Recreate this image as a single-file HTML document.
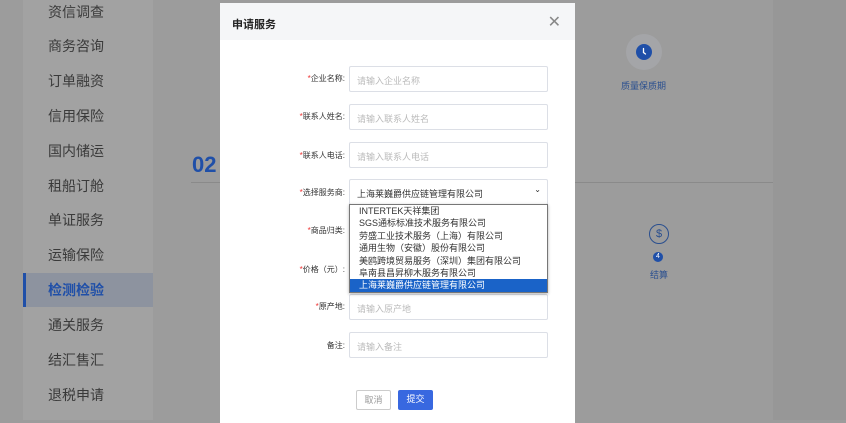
<!DOCTYPE html>
<html><head><meta charset="utf-8"><style>
*{margin:0;padding:0;box-sizing:border-box}
body{width:846px;height:420px;overflow:hidden;background:#9c9c9c;font-family:"Liberation Sans","Noto Sans CJK SC",sans-serif;position:relative}
.side{position:absolute;left:23px;top:0;width:130px;height:420px;background:#a2a2a2}
.side div{position:absolute;left:25px;font-size:14px;color:#3a3a3a;line-height:20px}
.act{position:absolute;left:23px;top:273px;width:130px;height:34px;background:#8d939f;border-left:3px solid #1f4fa8}
.right{position:absolute;left:773px;top:0;width:73px;height:420px;background:#979797}
.modal{position:absolute;left:220px;top:3px;width:355px;height:420px;background:#fff}
.hd{height:37px;background:#f5f6f8;padding:13px 12px;font-size:11px;font-weight:bold;color:#222}
.x{position:absolute;right:14px;top:9px;font-size:16px;color:#888}
.lab{position:absolute;right:230px;font-size:8px;color:#333;width:100px;text-align:right}
.lab b{color:#e33;font-weight:normal}
.in{position:absolute;left:129px;width:199px;height:26px;border:1px solid #dcdfe6;border-radius:2px;font-size:9px;color:#bbb;padding:7px 7px}
.dd{position:absolute;left:129px;top:201px;width:199px;height:89px;border:1px solid #777;background:#fff;font-size:9px;color:#333;box-shadow:0 1px 3px rgba(0,0,0,.3)}
.dd div{height:12.4px;line-height:12.4px;padding-left:9px;white-space:nowrap}
.dd .s{background:#1a63c8;color:#fff}
.btn{position:absolute;top:387px;height:20px;font-size:9px;border-radius:2px;text-align:center;line-height:18px}
</style></head><body>
<div class="side">
<div style="top:2px">资信调查</div><div style="top:36px">商务咨询</div><div style="top:71px">订单融资</div><div style="top:106px">信用保险</div><div style="top:141px">国内储运</div><div style="top:176px">租船订舱</div><div style="top:210px">单证服务</div><div style="top:245px">运输保险</div>
</div>
<div class="act"></div>
<div style="position:absolute;left:48px;top:280px;font-size:14px;font-weight:bold;color:#1f4fa8">检测检验</div>
<div class="side" style="background:none"><div style="top:315px">通关服务</div><div style="top:350px">结汇售汇</div><div style="top:385px">退税申请</div></div>
<div style="position:absolute;left:192px;top:152px;font-size:22px;font-weight:bold;color:#1f4fa8">02</div>
<div style="position:absolute;left:191px;top:182px;width:600px;height:1px;background:#8a8a8a"></div>
<div class="right"></div>
<div style="position:absolute;left:626px;top:34px;width:36px;height:36px;border-radius:50%;background:#a4a5a8"></div>
<svg style="position:absolute;left:636px;top:44px" width="16" height="16" viewBox="0 0 16 16"><circle cx="8" cy="8" r="8" fill="#1f4fa8"/><path d="M7.5 4.5V8.5L9.5 10" stroke="#fff" stroke-width="1.3" fill="none" stroke-linecap="round"/></svg>
<div style="position:absolute;left:621px;top:79px;font-size:9px;color:#2a4f8f">质量保质期</div>
<div style="position:absolute;left:649px;top:224px;width:20px;height:20px;border-radius:50%;border:1px solid #2a4f8f;font-size:11px;color:#2a4f8f;text-align:center;line-height:18px">$</div>
<div style="position:absolute;left:653px;top:252px;width:10px;height:10px;border-radius:50%;background:#1f4fa8;color:#fff;font-size:7px;text-align:center;line-height:10px">4</div>
<div style="position:absolute;left:650px;top:268px;font-size:9px;color:#2a4f8f">结算</div>
<div class="modal">
<div class="hd">申请服务</div><div class="x">✕</div>
<div class="lab" style="top:70px"><b>*</b>企业名称:</div><div class="in" style="top:63px">请输入企业名称</div>
<div class="lab" style="top:108px"><b>*</b>联系人姓名:</div><div class="in" style="top:101px">请输入联系人姓名</div>
<div class="lab" style="top:147px"><b>*</b>联系人电话:</div><div class="in" style="top:139px">请输入联系人电话</div>
<div class="lab" style="top:184px"><b>*</b>选择服务商:</div><div class="in" style="top:176px;color:#333">上海莱巍爵供应链管理有限公司<span style="position:absolute;right:6px;top:5px;font-size:8px">⌄</span></div>
<div class="lab" style="top:222px"><b>*</b>商品归类:</div>
<div class="lab" style="top:261px"><b>*</b>价格（元）:</div>
<div class="lab" style="top:298px"><b>*</b>原产地:</div><div class="in" style="top:291px">请输入原产地</div>
<div class="lab" style="top:337px">备注:</div><div class="in" style="top:329px">请输入备注</div>
<div class="dd"><div>INTERTEK天祥集团</div><div>SGS通标标准技术服务有限公司</div><div>劳盛工业技术服务（上海）有限公司</div><div>通用生物（安徽）股份有限公司</div><div>美鸥跨境贸易服务（深圳）集团有限公司</div><div>阜南县昌昇柳木服务有限公司</div><div class="s">上海莱巍爵供应链管理有限公司</div></div>
<div class="btn" style="left:136px;width:35px;border:1px solid #ccc;color:#999">取消</div>
<div class="btn" style="left:178px;width:35px;background:#3868e0;color:#fff">提交</div>
</div>
</body></html>
